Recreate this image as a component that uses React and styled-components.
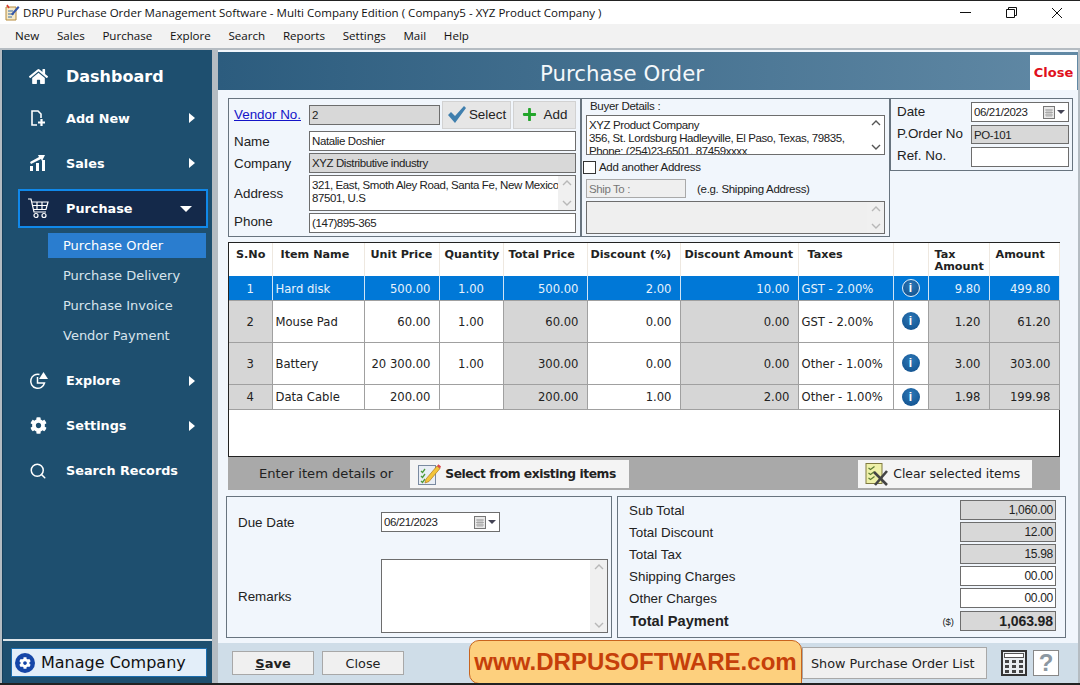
import styled, { createGlobalStyle } from "styled-components";
import { FaHome, FaCog, FaPlus } from "react-icons/fa";
import { Search } from "lucide-react";

const GlobalStyle = createGlobalStyle`
  html, body { margin: 0; padding: 0; background: #fff; }
  * { box-sizing: border-box; }
`;

const ui = `"Open Sans", "Noto Sans", sans-serif`;
const form = `"Liberation Sans", Arial, sans-serif`;
const wide = `"DejaVu Sans", Verdana, sans-serif`;

const Window = styled.div`
  position: relative;
  width: 1080px;
  height: 685px;
  display: flex;
  flex-direction: column;
  overflow: hidden;
  border-top: 1px solid #222;
  border-bottom: 2px solid #222;
  background: #fff;
`;

const TitleBar = styled.div`
  height: 23px;
  display: flex;
  align-items: center;
  padding-left: 4px;
  font: 11.55px ${ui};
  color: #111;
`;
const TitleText = styled.span`
  margin-left: 3px;
  flex: 1;
`;
const WinButtons = styled.div`
  display: flex;
  align-items: center;
`;
const WinBtn = styled.div`
  width: 46px;
  height: 23px;
  display: flex;
  align-items: center;
  justify-content: center;
`;

const MenuBar = styled.div`
  height: 24px;
  display: flex;
  align-items: center;
  gap: 17.7px;
  padding: 0 0 1px 15px;
  background: #f2f2f2;
  font: 11.6px ${ui};
  color: #111;
`;

const Body = styled.div`
  flex: 1;
  display: flex;
  min-height: 0;
  background: #b5bcc2;
  padding: 2px 2px 0 2px;
`;

const Sidebar = styled.nav`
  width: 210px;
  display: flex;
  flex-direction: column;
  background: #1e4f6f;
  border-left: 1px solid #16405c;
  padding-top: 5px;
  color: #fff;
  font: bold 12.8px ${wide};
`;
const NavItem = styled.div`
  height: ${(p) => p.$h || 45}px;
  display: flex;
  align-items: center;
  padding-right: 17px;
  margin-top: ${(p) => p.$mt || 0}px;
`;
const NavIcon = styled.span`
  width: 63px;
  display: flex;
  justify-content: center;
  padding-left: 7px;
`;
const NavLabel = styled.span`
  flex: 1;
  font-size: ${(p) => (p.$big ? 16 : 12.8)}px;
`;
const Arrow = styled.span`
  width: 0;
  height: 0;
  border-top: 5px solid transparent;
  border-bottom: 5px solid transparent;
  border-left: 6px solid #fff;
`;
const ActiveItem = styled.div`
  height: 39px;
  margin: 2px 4px 0 15px;
  display: flex;
  align-items: center;
  background: #14294a;
  border: 2px solid #1088ea;
  padding-right: 14px;
`;
const ActiveIcon = styled.span`
  width: 36px;
  margin-right: 10px;
  display: flex;
  justify-content: center;
`;
const DownArrow = styled.span`
  width: 0;
  height: 0;
  border-left: 6px solid transparent;
  border-right: 6px solid transparent;
  border-top: 6px solid #fff;
`;
const SubList = styled.div`
  display: flex;
  flex-direction: column;
  gap: 5px;
  margin: 5px 6px 0 45px;
  font: 13px ${wide};
`;
const SubItem = styled.div`
  height: 25px;
  display: flex;
  align-items: center;
  padding-left: 15px;
  color: ${(p) => (p.$active ? "#fff" : "#d8e4ec")};
  background: ${(p) => (p.$active ? "#2a7dcf" : "transparent")};
`;
const ManageWrap = styled.div`
  margin-top: auto;
  height: 44px;
  border-top: 2px solid #dfe6ea;
  padding: 7px 5px 6px 8px;
`;
const ManageBtn = styled.div`
  height: 29px;
  display: flex;
  align-items: center;
  gap: 6px;
  padding-left: 3px;
  background: #e3eef9;
  border: 1px solid #1a6cad;
  color: #111;
  font: 16px ${wide};
`;
const ManageIcon = styled.span`
  width: 20px;
  height: 20px;
  border-radius: 50%;
  background: #1546a8;
  display: flex;
  align-items: center;
  justify-content: center;
  color: #fff;
`;

const Main = styled.main`
  width: 860px;
  margin-left: 6px;
  display: flex;
  flex-direction: column;
  background: #f1f6fc;
  padding-top: 2px;
`;
const Header = styled.header`
  height: 38px;
  display: flex;
  align-items: center;
  background: linear-gradient(90deg, #2c5c7e, #6189a5);
  color: #f4f8fb;
  font: 21.3px ${wide};
`;
const HeaderTitle = styled.div`
  flex: 1;
  text-align: center;
  padding: 5px 4px 0 0;
`;
const HeaderClose = styled.div`
  width: 47px;
  height: 35px;
  margin-top: 3px;
  margin-right: 1px;
  background: #fff;
  color: #e0101c;
  font: bold 13px ${wide};
  display: flex;
  align-items: center;
  justify-content: center;
`;

const TopRow = styled.div`
  display: flex;
  align-items: flex-start;
  margin: 8px 0 0 10px;
`;
const Panel = styled.section`
  border: 1px solid #68747f;
  width: ${(p) => p.$w}px;
  height: ${(p) => p.$h}px;
  margin-left: ${(p) => p.$ml || 0}px;
  flex: none;
`;
const VendorGrid = styled(Panel)`
  display: grid;
  grid-template-columns: 75px minmax(0, 1fr);
  grid-template-rows: 29px 20px 20px 36px 20px;
  gap: 2px 0;
  padding: 1px 4px 0 5px;
  align-items: center;
`;
const Lbl = styled.label`
  font: 13.4px ${form};
  color: #222;
  margin-top: ${(p) => p.$mt || 0}px;
`;
const VendorLink = styled(Lbl)`
  color: #1414c8;
  text-decoration: underline;
`;
const Field = styled.div`
  height: ${(p) => p.$h || 20}px;
  width: ${(p) => (p.$w ? p.$w + "px" : "auto")};
  border: 1px solid ${(p) => (p.$dis ? "#a9a9a9" : "#6d6d6d")};
  background: ${(p) => (p.$gray ? "#d8d8d8" : p.$dis ? "#efefef" : "#fff")};
  color: ${(p) => (p.$dis ? "#777" : "#222")};
  font: 11.5px ${form};
  display: flex;
  align-items: center;
  justify-content: ${(p) => (p.$right ? "flex-end" : "flex-start")};
  padding: 0 2px;
  letter-spacing: -0.4px;
  white-space: nowrap;
  overflow: hidden;
`;
const VendorTop = styled.div`
  display: flex;
  align-items: center;
  gap: 2px;
`;
const ToolBtn = styled.div`
  height: 28px;
  width: ${(p) => p.$w}px;
  background: #e6e6e6;
  border: 1px solid #d2d2d2;
  display: flex;
  align-items: center;
  justify-content: center;
  gap: ${(p) => p.$gap}px;
  font: 13.4px ${form};
  color: #222;
`;
const MemoBox = styled.div`
  position: relative;
  height: ${(p) => p.$h}px;
  width: ${(p) => (p.$w ? p.$w + "px" : "auto")};
  border: 1px solid #6d6d6d;
  background: ${(p) => (p.$dis ? "#efefef" : "#fff")};
  padding: 3px 18px 0 2px;
  font: 11.5px/13px ${form};
  letter-spacing: -0.4px;
  color: #222;
  white-space: nowrap;
  overflow: hidden;
`;
const ScrollTrack = styled.div`
  position: absolute;
  right: 0;
  top: 0;
  bottom: 0;
  width: 17px;
  background: ${(p) => (p.$soft ? "#f0f0f0" : "#fff")};
  display: flex;
  flex-direction: column;
  justify-content: space-between;
  align-items: center;
  padding: 3px 0;
`;

const BuyerPanel = styled(Panel)`
  padding: 0 4px;
  font: 11.5px ${form};
  letter-spacing: -0.3px;
  color: #222;
`;
const BuyerCaption = styled.div`
  height: 16px;
  padding-left: 4px;
  line-height: 14px;
`;
const CheckRow = styled.div`
  display: flex;
  align-items: center;
  gap: 3px;
  margin: 5px 0 0 -3px;
  height: 14px;
`;
const CheckBox = styled.span`
  width: 13px;
  height: 13px;
  border: 1px solid #333;
  background: #fff;
`;
const ShipRow = styled.div`
  display: flex;
  align-items: center;
  gap: 11px;
  margin: 5px 0 3px;
`;

const DateGrid = styled(Panel)`
  display: grid;
  grid-template-columns: 74px 98px;
  grid-template-rows: 20px 19px 20px;
  gap: 3px 0;
  padding: 3px 0 0 6px;
  align-items: center;
`;
const DateValue = styled(Field)`
  justify-content: space-between;
  padding-right: 3px;
`;
const CalIcon = styled.span`
  display: flex;
  align-items: center;
  gap: 2px;
`;

const TableWrap = styled.div`
  margin: 5px 0 0 10px;
  width: 832px;
  height: 215px;
  border: 1px solid #222;
  background: #fff;
`;
const Table = styled.table`
  width: 830px;
  table-layout: fixed;
  border-collapse: collapse;
  font: 11.6px ${wide};
  color: #222;
`;
const Th = styled.th`
  height: 33px;
  padding: 6px 0 0 ${(p) => p.$pl || 7}px;
  text-align: left;
  vertical-align: top;
  font: bold 11.2px/12px ${wide};
  color: #222;
  border-right: 1px solid #eee8e0;
  white-space: nowrap;
`;
const Tr = styled.tr`
  height: ${(p) => p.$h}px;
`;
const Td = styled.td`
  padding: ${(p) => p.$pt}px ${(p) => (p.$left || p.$center ? 0 : 8)}px 0 ${(p) => (p.$left ? 3 : 0)}px;
  text-align: ${(p) => (p.$center ? "center" : p.$left ? "left" : "right")};
  background: ${(p) => (p.$sel ? "#0078d7" : p.$gray ? "#d6d6d6" : "#fff")};
  color: ${(p) => (p.$sel ? "#e8f3fc" : "#222")};
  border-right: 1px solid ${(p) => (p.$sel ? "#d0e4f6" : "#a0a0a0")};
  border-bottom: 1px solid #a0a0a0;
  white-space: nowrap;
`;
const InfoCell = styled.td`
  padding: 0;
  text-align: center;
  background: ${(p) => (p.$sel ? "#0078d7" : "#fff")};
  border-right: 1px solid ${(p) => (p.$sel ? "#d0e4f6" : "#a0a0a0")};
  border-bottom: 1px solid #a0a0a0;
`;
const InfoDot = styled.span`
  display: inline-flex;
  width: 18px;
  height: 18px;
  align-items: center;
  justify-content: center;
  border-radius: 50%;
  background: radial-gradient(circle at 50% 35%, #2c78b8, #0e4c88);
  border: ${(p) => (p.$sel ? "1px solid #e8f3fc" : "none")};
  color: #fff;
  font: bold 12px ${form};
`;

const ItemBar = styled.div`
  width: 832px;
  height: 33px;
  margin-left: 10px;
  background: #a9a9a9;
  display: flex;
  align-items: center;
  padding-left: 31px;
  font: 13.1px ${wide};
  color: #222;
  white-space: nowrap;
`;
const BarBtn = styled.div`
  height: 28px;
  width: ${(p) => p.$w}px;
  margin-left: ${(p) => p.$ml}px;
  background: #f4f4f4;
  display: flex;
  align-items: center;
  gap: 4px;
  padding-left: ${(p) => p.$pl}px;
  color: #222;
  font: 12.4px ${wide};
`;
const BarBtnStrong = styled.span`
  font: bold 12.3px ${wide};
  letter-spacing: -0.46px;
`;

const BottomRow = styled.div`
  display: flex;
  margin: 6px 0 0 8px;
`;
const DuePanel = styled(Panel)`
  display: grid;
  grid-template-columns: 143px 1fr;
  grid-template-rows: 62px 1fr;
  padding: 0 3px 0 11px;
`;
const DueLabel = styled(Lbl)`
  padding-top: ${(p) => p.$pt}px;
`;
const DueField = styled.div`
  padding-top: 15px;
`;
const TotalsPanel = styled(Panel)`
  display: flex;
  flex-direction: column;
  gap: 2px;
  padding: 3px 9px 0 11px;
`;
const TotalRow = styled.div`
  height: 20px;
  display: flex;
  align-items: center;
  justify-content: space-between;
  font: ${(p) => (p.$bold ? "bold 14.6px" : "13.4px")} ${form};
  color: #222;
  padding-left: ${(p) => (p.$bold ? 1 : 0)}px;
  margin-top: ${(p) => (p.$bold ? 1 : 0)}px;
`;
const TotalEnd = styled.div`
  display: flex;
  align-items: center;
  gap: 6px;
`;
const Currency = styled.span`
  font: 9.5px ${form};
`;
const TotalValue = styled(Field)`
  font-size: ${(p) => (p.$bold ? 14 : 12)}px;
  font-weight: ${(p) => (p.$bold ? "bold" : "normal")};
  letter-spacing: ${(p) => (p.$bold ? "-0.1px" : "-0.3px")};
`;

const Footer = styled.footer`
  flex: 1;
  margin-top: 5px;
  background: #cfdde8;
  display: flex;
  align-items: center;
  padding-left: 14px;
`;
const FootBtn = styled.div`
  height: ${(p) => p.$h || 24}px;
  width: ${(p) => p.$w}px;
  margin-left: ${(p) => p.$ml || 0}px;
  background: #f0f0f0;
  border: 1px solid #a8a8a8;
  display: flex;
  align-items: center;
  justify-content: ${(p) => (p.$pl ? "flex-start" : "center")};
  padding-left: ${(p) => p.$pl || 0}px;
  font: ${(p) => (p.$bold ? "bold 13px" : "12.8px")} ${wide};
  color: #222;
`;
const CalcSlot = styled.span`
  display: flex;
  margin-left: 14px;
`;
const HelpBtn = styled.div`
  width: 26px;
  height: 26px;
  margin-left: 6px;
  background: #fff;
  border: 1px solid #888;
  display: flex;
  align-items: center;
  justify-content: center;
  font: bold 24px ${form};
  color: #8c98a2;
`;
const Promo = styled.div`
  position: absolute;
  left: 469px;
  top: 639px;
  width: 333px;
  height: 44px;
  background: #fdd07e;
  border: 1px solid #c8641e;
  border-radius: 10px 10px 0 10px;
  color: #c63f0a;
  font: bold 24.05px ${form};
  display: flex;
  align-items: center;
  justify-content: center;
`;

const Chevron = ({ up, color = "#555" }) => (
  <svg width="10" height="7" viewBox="0 0 10 7">
    <path d={up ? "M1 6l4-4 4 4" : "M1 1l4 4 4-4"} fill="none" stroke={color} strokeWidth="1.4" />
  </svg>
);

const SoftScroll = () => (
  <ScrollTrack $soft>
    <Chevron up color="#b8b8b8" />
    <Chevron color="#b8b8b8" />
  </ScrollTrack>
);

const CalendarDrop = () => (
  <CalIcon>
    <svg width="12" height="13" viewBox="0 0 12 13">
      <rect x="0.5" y="0.5" width="11" height="12" fill="#e8e8e8" stroke="#777" />
      <path d="M2 4h8M2 6.5h8M2 9h8M4 3v8M6 3v8M8 3v8" stroke="#999" strokeWidth="0.7" />
    </svg>
    <svg width="8" height="4" viewBox="0 0 8 4"><path d="M0 0h8L4 4z" fill="#445" /></svg>
  </CalIcon>
);

const AppLogo = () => (
  <svg width="16" height="17" viewBox="0 0 16 17">
    <path d="M2 3h10v13H2z" fill="#f5e9c8" stroke="#b58a3a" />
    <path d="M4 7h5M4 10h6M4 13h4" stroke="#3a6ea8" />
    <path d="M7 10l7-8 1.5 1.5-7 8z" fill="#3556a8" />
    <path d="M3 1l2 3" stroke="#d8352a" strokeWidth="1.5" />
  </svg>
);
const AddNewIcon = () => (
  <svg width="18" height="18" viewBox="0 0 18 18" fill="none" stroke="#fff" strokeWidth="1.6">
    <path d="M8 16H3V2h6l3 3v4" />
    <path d="M12.5 10v7M9 13.5h7" strokeWidth="2.2" />
  </svg>
);
const SalesIcon = () => (
  <svg width="18" height="18" viewBox="0 0 18 18" fill="#fff">
    <rect x="1" y="12" width="3" height="5" />
    <rect x="7" y="9" width="3" height="8" />
    <rect x="13" y="6" width="3" height="11" />
    <path d="M1 8l9-5-1-2 7 0-3 6-1-2-10 5z" />
  </svg>
);
const CartIcon = () => (
  <svg width="21" height="21" viewBox="0 0 21 21" fill="none" stroke="#fff" strokeWidth="1.2">
    <path d="M0 1h3l3 13h12" />
    <path d="M4 4h16l-2 7.5H6M5 7.500h14M9 4v7.500M14 4v7.500" />
    <circle cx="8" cy="17.5" r="2" />
    <circle cx="16" cy="17.5" r="2" />
  </svg>
);
const CheckIcon = () => (
  <svg width="20" height="17" viewBox="0 0 20 17">
    <path d="M1 9l3-3 4 4 9-10 2 2-11 15z" fill="#3f7fae" />
  </svg>
);
const ExploreIcon = () => (
  <svg width="19" height="19" viewBox="0 0 19 19" fill="none" stroke="#fff" strokeWidth="1.5">
    <path d="M10.5 3.5A7 7 0 1 0 15.5 12H8.5V6" />
    <path d="M14.5 1l4.500 7h-9z" fill="#fff" stroke="none" />
  </svg>
);
const PencilList = () => (
  <svg width="24" height="24" viewBox="0 0 24 24">
    <rect x="1.5" y="3.5" width="17" height="19" fill="#e9eef5" stroke="#7a8aa0" />
    <path d="M4 9l1.5 1.500L8 7M4 14l1.500 1.500L8 12M4 19l1.500 1.500L8 17" fill="none" stroke="#4c9a3a" strokeWidth="1.3" />
    <path d="M9 17l11-13 3 2.500-11 13-4 1.500z" fill="#f3c53a" stroke="#b07a1a" strokeWidth="0.7" />
    <path d="M20 4l1.400-1.700 2.600 2.200L23 6.500z" fill="#d8484a" />
  </svg>
);
const ClearList = () => (
  <svg width="24" height="24" viewBox="0 0 24 24">
    <rect x="1" y="1.5" width="16" height="20" fill="#eef0a8" stroke="#807a40" />
    <path d="M3.5 6l2 1.500 4-3M3.500 11l2 1.500 4-3M3.500 16l2 1.500 4-3" fill="none" stroke="#5a7a30" strokeWidth="1.2" />
    <path d="M9 10l13 13M22 9L10 23" stroke="#444" strokeWidth="2.6" />
  </svg>
);
const CalcIcon = () => (
  <svg width="26" height="26" viewBox="0 0 26 26">
    <rect x="1" y="1" width="24" height="24" fill="#e9edf0" stroke="#333" strokeWidth="2" />
    <rect x="3.5" y="3.5" width="19" height="4" fill="#fff" stroke="#555" />
    {[10, 15, 20].map((y) =>
      [4, 11, 18].map((x) => <rect key={x + "-" + y} x={x} y={y} width="4" height="3" fill="#444" />)
    )}
  </svg>
);

const navBefore = [
  { label: "Add New", icon: <AddNewIcon />, h: 42, arrow: true },
  { label: "Sales", icon: <SalesIcon />, h: 48, arrow: true },
];
const navAfter = [
  { label: "Explore", icon: <ExploreIcon />, mt: 10, arrow: true },
  { label: "Settings", icon: <FaCog size={17} />, arrow: true },
  { label: "Search Records", icon: <Search size={18} strokeWidth={2} /> },
];

const columns = [43, 92, 75, 64, 84, 93, 118, 95, 35, 61, 70];
const rows = [
  { h: 24, pt: 3, no: 1, name: "Hard disk", unit: "500.00", qty: "1.00", total: "500.00", disc: "2.00", amt: "10.00", tax: "GST - 2.00%", taxAmt: "9.80", amount: "499.80", sel: true },
  { h: 42, pt: 2, no: 2, name: "Mouse Pad", unit: "60.00", qty: "1.00", total: "60.00", disc: "0.00", amt: "0.00", tax: "GST - 2.00%", taxAmt: "1.20", amount: "61.20" },
  { h: 42, pt: 2, no: 3, name: "Battery", unit: "20 300.00", qty: "1.00", total: "300.00", disc: "0.00", amt: "0.00", tax: "Other - 1.00%", taxAmt: "3.00", amount: "303.00" },
  { h: 25, pt: 0, no: 4, name: "Data Cable", unit: "200.00", qty: "", total: "200.00", disc: "1.00", amt: "2.00", tax: "Other - 1.00%", taxAmt: "1.98", amount: "199.98" },
];
const totals = [
  { label: "Sub Total", value: "1,060.00", gray: true },
  { label: "Total Discount", value: "12.00", gray: true },
  { label: "Total Tax", value: "15.98", gray: true },
  { label: "Shipping Charges", value: "00.00" },
  { label: "Other Charges", value: "00.00" },
];

const NavRow = ({ item }) => (
  <NavItem $h={item.h} $mt={item.mt}>
    <NavIcon>{item.icon}</NavIcon>
    <NavLabel>{item.label}</NavLabel>
    {item.arrow && <Arrow />}
  </NavItem>
);

export default function App() {
  return (
    <Window>
      <GlobalStyle />
      <TitleBar>
        <AppLogo />
        <TitleText>DRPU Purchase Order Management Software - Multi Company Edition ( Company5 - XYZ Product Company )</TitleText>
        <WinButtons>
          <WinBtn>
            <svg width="11" height="11" viewBox="0 0 11 11"><path d="M0 5.5h11" stroke="#111" /></svg>
          </WinBtn>
          <WinBtn>
            <svg width="11" height="11" viewBox="0 0 11 11" fill="none" stroke="#111"><path d="M.5 2.5h8v8h-8zM2.5 2.5v-2h8v8h-2" /></svg>
          </WinBtn>
          <WinBtn>
            <svg width="12" height="12" viewBox="0 0 12 12"><path d="M1 1l10 10M11 1L1 11" stroke="#111" /></svg>
          </WinBtn>
        </WinButtons>
      </TitleBar>
      <MenuBar>
        {["New", "Sales", "Purchase", "Explore", "Search", "Reports", "Settings", "Mail", "Help"].map((m) => (
          <span key={m}>{m}</span>
        ))}
      </MenuBar>
      <Body>
        <Sidebar>
          <NavItem $h={42}>
            <NavIcon><FaHome size={19} /></NavIcon>
            <NavLabel $big>Dashboard</NavLabel>
          </NavItem>
          {navBefore.map((item) => <NavRow key={item.label} item={item} />)}
          <ActiveItem>
            <ActiveIcon><CartIcon /></ActiveIcon>
            <NavLabel>Purchase</NavLabel>
            <DownArrow />
          </ActiveItem>
          <SubList>
            <SubItem $active>Purchase Order</SubItem>
            <SubItem>Purchase Delivery</SubItem>
            <SubItem>Purchase Invoice</SubItem>
            <SubItem>Vendor Payment</SubItem>
          </SubList>
          {navAfter.map((item) => <NavRow key={item.label} item={item} />)}
          <ManageWrap>
            <ManageBtn>
              <ManageIcon><FaCog size={12} /></ManageIcon>
              Manage Company
            </ManageBtn>
          </ManageWrap>
        </Sidebar>

        <Main>
          <Header>
            <HeaderTitle>Purchase Order</HeaderTitle>
            <HeaderClose>Close</HeaderClose>
          </Header>

          <TopRow>
            <VendorGrid $w={353} $h={139}>
              <VendorLink>Vendor No.</VendorLink>
              <VendorTop>
                <Field $w={131} $gray>2</Field>
                <ToolBtn $w={69} $gap={2}><CheckIcon />Select</ToolBtn>
                <ToolBtn $w={63} $gap={7}><FaPlus size={15} color="#22a52a" />Add</ToolBtn>
              </VendorTop>
              <Lbl>Name</Lbl>
              <Field>Natalie Doshier</Field>
              <Lbl>Company</Lbl>
              <Field $gray>XYZ Distributive industry</Field>
              <Lbl>Address</Lbl>
              <MemoBox $h={36}>
                321, East, Smoth Aley Road, Santa Fe, New Mexico
                <br />87501, U.S
                <SoftScroll />
              </MemoBox>
              <Lbl $mt={-4}>Phone</Lbl>
              <Field>(147)895-365</Field>
            </VendorGrid>

            <BuyerPanel $w={309} $h={139}>
              <BuyerCaption>Buyer Details :</BuyerCaption>
              <MemoBox $h={40}>
                XYZ Product Company
                <br />356, St. Lordsburg Hadleyville, El Paso, Texas, 79835,
                <br />Phone: (254)23-6501, 87459xxxx
                <ScrollTrack><Chevron up /><Chevron /></ScrollTrack>
              </MemoBox>
              <CheckRow>
                <CheckBox />
                Add another Address
              </CheckRow>
              <ShipRow>
                <Field $w={100} $h={19} $dis>Ship To :</Field>
                (e.g. Shipping Address)
              </ShipRow>
              <MemoBox $h={33} $dis>
                <SoftScroll />
              </MemoBox>
            </BuyerPanel>

            <DateGrid $w={183} $h={73}>
              <Lbl $mt={-2}>Date</Lbl>
              <DateValue>06/21/2023<CalendarDrop /></DateValue>
              <Lbl $mt={-3}>P.Order No</Lbl>
              <Field $gray $h={19}>PO-101</Field>
              <Lbl $mt={-3}>Ref. No.</Lbl>
              <Field />
            </DateGrid>
          </TopRow>

          <TableWrap>
            <Table>
              <colgroup>
                {columns.map((w, i) => <col key={i} style={{ width: w }} />)}
              </colgroup>
              <thead>
                <tr>
                  <Th>S.No</Th>
                  <Th $pl={8}>Item Name</Th>
                  <Th $pl={6}>Unit Price</Th>
                  <Th $pl={5}>Quantity</Th>
                  <Th $pl={5}>Total Price</Th>
                  <Th $pl={3}>Discount (%)</Th>
                  <Th $pl={4}>Discount Amount</Th>
                  <Th $pl={9}>Taxes</Th>
                  <Th />
                  <Th $pl={6}>Tax<br />Amount</Th>
                  <Th $pl={6}>Amount</Th>
                </tr>
              </thead>
              <tbody>
                {rows.map((r) => (
                  <Tr key={r.no} $h={r.h}>
                    <Td $pt={r.pt} $center $sel={r.sel} $gray>{r.no}</Td>
                    <Td $pt={r.pt} $left $sel={r.sel}>{r.name}</Td>
                    <Td $pt={r.pt} $sel={r.sel}>{r.unit}</Td>
                    <Td $pt={r.pt} $center $sel={r.sel}>{r.qty}</Td>
                    <Td $pt={r.pt} $sel={r.sel} $gray>{r.total}</Td>
                    <Td $pt={r.pt} $sel={r.sel}>{r.disc}</Td>
                    <Td $pt={r.pt} $sel={r.sel} $gray>{r.amt}</Td>
                    <Td $pt={r.pt} $left $sel={r.sel}>{r.tax}</Td>
                    <InfoCell $sel={r.sel}><InfoDot $sel={r.sel}>i</InfoDot></InfoCell>
                    <Td $pt={r.pt} $sel={r.sel} $gray>{r.taxAmt}</Td>
                    <Td $pt={r.pt} $sel={r.sel} $gray>{r.amount}</Td>
                  </Tr>
                ))}
              </tbody>
            </Table>
          </TableWrap>

          <ItemBar>
            Enter item details or
            <BarBtn $w={219} $ml={17} $pl={7}><PencilList /><BarBtnStrong>Select from existing items</BarBtnStrong></BarBtn>
            <BarBtn $w={174} $ml={229} $pl={7}><ClearList />Clear selected items</BarBtn>
          </ItemBar>

          <BottomRow>
            <DuePanel $w={386} $h={142}>
              <DueLabel $pt={18}>Due Date</DueLabel>
              <DueField>
                <DateValue $w={119}>06/21/2023<CalendarDrop /></DateValue>
              </DueField>
              <DueLabel $pt={30}>Remarks</DueLabel>
              <MemoBox $h={74} $w={227}>
                <SoftScroll />
              </MemoBox>
            </DuePanel>
            <TotalsPanel $w={449} $h={142} $ml={5}>
              {totals.map((t) => (
                <TotalRow key={t.label}>
                  {t.label}
                  <TotalValue $w={96} $right $gray={t.gray}>{t.value}</TotalValue>
                </TotalRow>
              ))}
              <TotalRow $bold>
                Total Payment
                <TotalEnd>
                  <Currency>($)</Currency>
                  <TotalValue $w={96} $right $gray $bold>1,063.98</TotalValue>
                </TotalEnd>
              </TotalRow>
            </TotalsPanel>
          </BottomRow>

          <Footer>
            <FootBtn $w={82} $bold><u>S</u>ave</FootBtn>
            <FootBtn $w={82} $ml={8}>Close</FootBtn>
            <FootBtn $w={185} $h={32} $ml={398} $pl={8}>Show Purchase Order List</FootBtn>
            <CalcSlot><CalcIcon /></CalcSlot>
            <HelpBtn>?</HelpBtn>
          </Footer>
        </Main>
      </Body>
      <Promo>www.DRPUSOFTWARE.com</Promo>
    </Window>
  );
}
